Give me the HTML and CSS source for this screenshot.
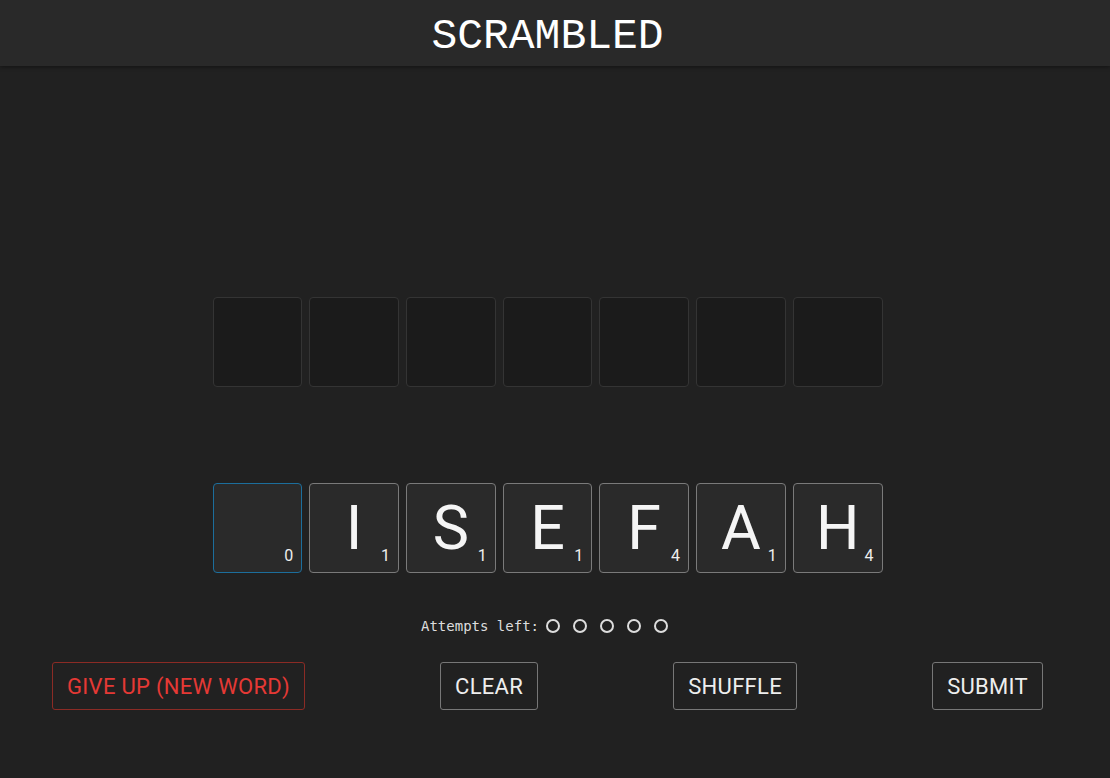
FILE: index.html
```html
<!DOCTYPE html>
<html>
<head>
<meta charset="utf-8">
<link rel="stylesheet" href="styles.css">
</head>
<body>
<header class="topbar"><h1 class="title">SCRAMBLED</h1></header>
<main class="game">
  <div class="row answer-row">
    <div class="slot"></div><div class="slot"></div><div class="slot"></div><div class="slot"></div><div class="slot"></div><div class="slot"></div><div class="slot"></div>
  </div>
  <div class="row letter-row">
    <div class="tile tile-active"><span class="score">0</span></div>
    <div class="tile"><span class="letter">I</span><span class="score">1</span></div>
    <div class="tile"><span class="letter">S</span><span class="score">1</span></div>
    <div class="tile"><span class="letter">E</span><span class="score">1</span></div>
    <div class="tile"><span class="letter">F</span><span class="score">4</span></div>
    <div class="tile"><span class="letter">A</span><span class="score">1</span></div>
    <div class="tile"><span class="letter">H</span><span class="score">4</span></div>
  </div>
  <div class="attempts">
    <span class="attempts-label">Attempts left:</span>
    <span class="dot"></span><span class="dot"></span><span class="dot"></span><span class="dot"></span><span class="dot"></span>
  </div>
  <div class="actions">
    <button class="btn btn-danger">GIVE UP (NEW WORD)</button>
    <button class="btn">CLEAR</button>
    <button class="btn">SHUFFLE</button>
    <button class="btn">SUBMIT</button>
  </div>
</main>
</body>
</html>
```
FILE: styles.css
```css
html, body {
  margin: 0;
  padding: 0;
  background: #212121;
  color: #eee;
  font-family: Roboto, "Liberation Sans", sans-serif;
}
.topbar {
  height: 66px;
  background: #292929;
  box-shadow: 0 1px 4px rgba(0,0,0,0.45);
  display: flex;
  align-items: center;
  justify-content: center;
  padding-right: 15px;
  position: relative;
  z-index: 1;
}
.title {
  margin: 6px 0 0;
  font-family: "Liberation Mono", monospace;
  font-weight: normal;
  font-size: 43px;
  color: #fff;
  line-height: 1;
}
.game {
  width: 1095px;
  display: flex;
  flex-direction: column;
  align-items: center;
}
.row {
  display: grid;
  grid-template-columns: repeat(7, 1fr);
  gap: 7px;
  width: 670px;
}
.answer-row { margin-top: 231px; }
.letter-row { margin-top: 96px; }
.slot, .tile {
  height: 90px;
  border-radius: 4px;
  box-sizing: border-box;
}
.slot {
  background: #1b1b1b;
  border: 1px solid #343434;
}
.tile {
  background: #2a2a2a;
  border: 1px solid #7a7a7a;
  display: flex;
  align-items: center;
  justify-content: center;
  position: relative;
}
.tile-active { border-color: #1c6e9c; }
.letter {
  font-size: 61px;
  color: #f5f5f5;
  line-height: 1;
}
.score {
  position: absolute;
  right: 8px;
  bottom: 8px;
  font-size: 16px;
  line-height: 1;
  color: #eee;
}
.attempts {
  margin-top: 45px;
  margin-left: -6px;
  display: flex;
  align-items: center;
  gap: 13px;
}
.attempts-label {
  font-family: "DejaVu Sans Mono", monospace;
  font-size: 14px;
  color: #ddd;
  margin-right: -6px;
}
.dot {
  width: 14px;
  height: 14px;
  border: 2px solid #ddd;
  border-radius: 50%;
  box-sizing: border-box;
}
.actions {
  margin-top: 28px;
  width: 100%;
  box-sizing: border-box;
  padding: 0 52px;
  display: flex;
  justify-content: space-between;
}
.btn {
  height: 48px;
  padding: 0 14px;
  background: transparent;
  border: 1px solid #777;
  border-radius: 3px;
  color: #eee;
  font-family: Roboto, "Liberation Sans", sans-serif;
  font-size: 22px;
  letter-spacing: 0.3px;
}
.btn-danger {
  color: #e53935;
  border-color: #8b2b25;
}
```
